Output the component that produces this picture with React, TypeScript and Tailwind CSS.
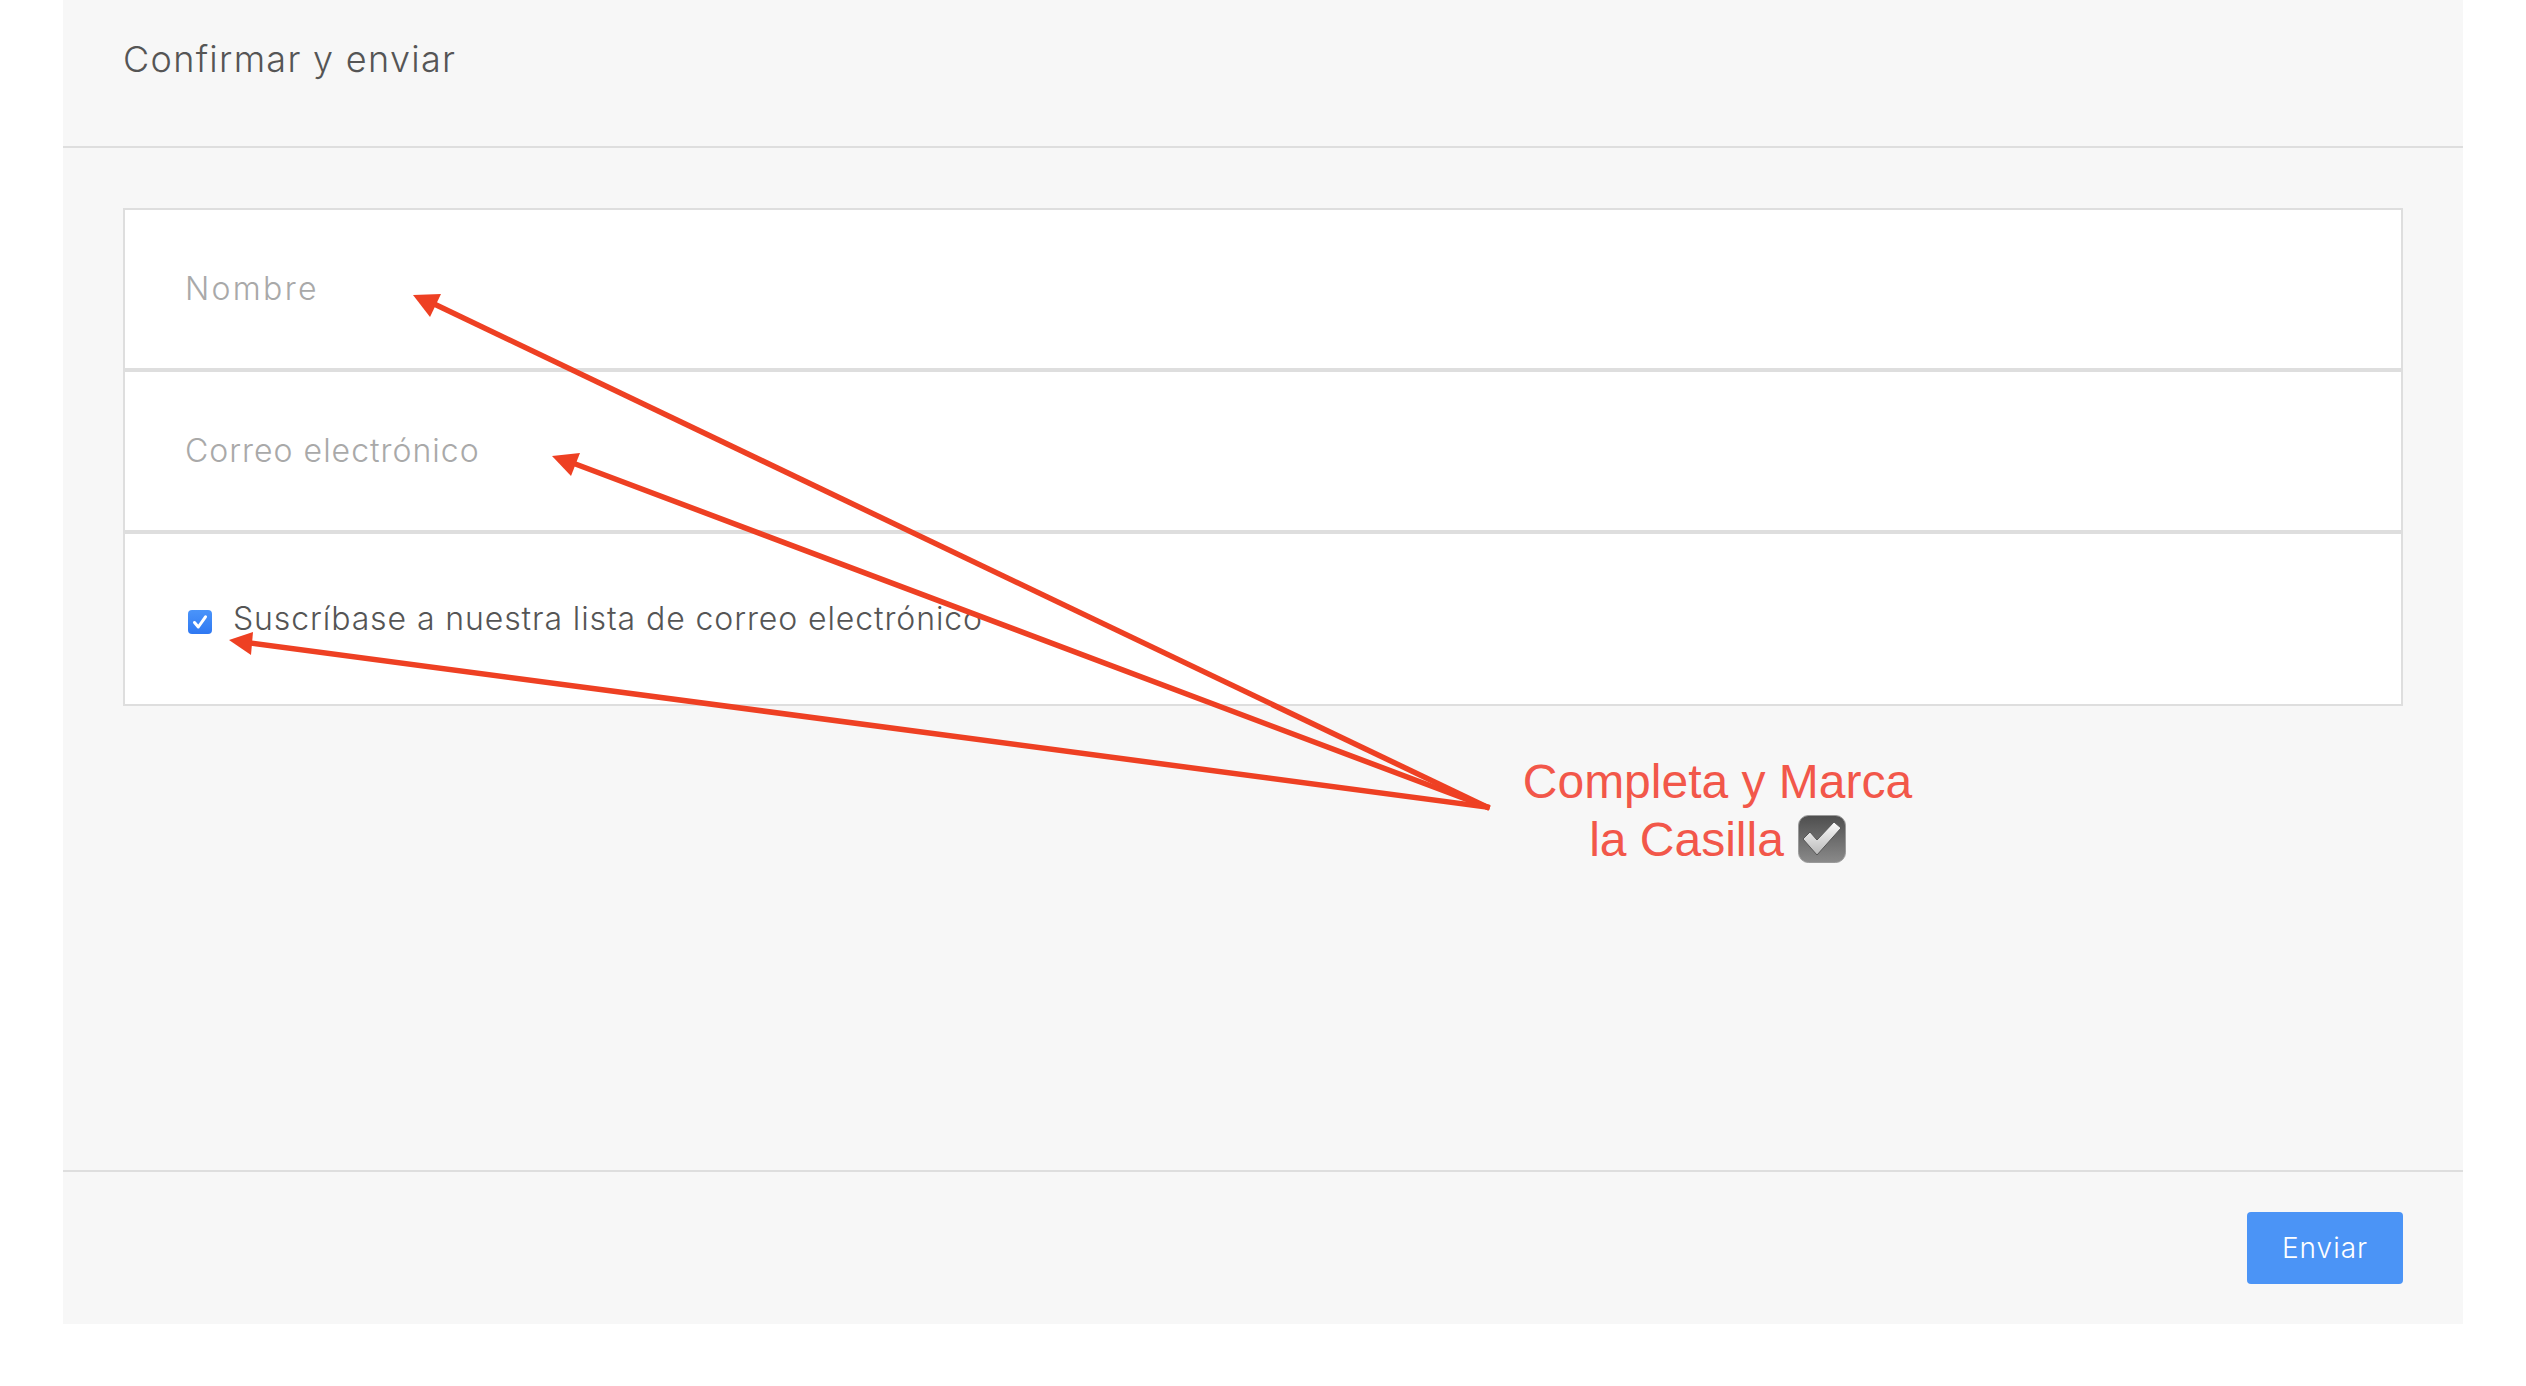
const FONT = "font-['Inter','Noto_Sans',sans-serif]";

function CheckedBox() {
  return (
    <span className="mt-[6px] flex h-6 w-6 shrink-0 items-center justify-center rounded-[4px] bg-gradient-to-b from-[#4a94fa] to-[#2f78f2]">
      <svg width="18" height="18" viewBox="0 0 18 18" fill="none">
        <path d="M3.5 9.5 L7.3 14 L14.5 3.8" stroke="#fff" strokeWidth="3" strokeLinecap="round" strokeLinejoin="round" />
      </svg>
    </span>
  );
}

function Field({ placeholder, tracking }: { placeholder: string; tracking: string }) {
  return (
    <div className="flex h-[162px] items-center border-b-4 border-[#dedede] bg-white pl-[60px]">
      <input
        type="text"
        placeholder={placeholder}
        className={`w-[900px] bg-transparent text-[32px] font-light text-[#555] outline-none placeholder:text-[#a9a9a9] ${tracking}`}
      />
    </div>
  );
}

// red annotation drawn on top of the form
function Arrows() {
  return (
    <svg className="pointer-events-none absolute left-0 top-0" width="2526" height="1386" viewBox="0 0 2526 1386" fill="none">
      <g stroke="#ee4023" strokeWidth="5.5" strokeLinecap="square">
        <line x1="1487" y1="807" x2="432" y2="303" />
        <line x1="1487" y1="807" x2="570" y2="462" />
        <line x1="1487" y1="807" x2="250" y2="643" />
      </g>
      <g fill="#ee4023">
        <polygon points="413,295 441,294 430,317" />
        <polygon points="552,456 580,453 571,476" />
        <polygon points="229,640 253,632 251,655" />
      </g>
    </svg>
  );
}

function Annotation() {
  return (
    <div className="absolute left-[1500px] top-[753px] w-[435px] text-center font-['Liberation_Sans',Arial,sans-serif] text-[48px] leading-[58px] text-[#f2574a]">
      <div>Completa y Marca</div>
      <div className="flex items-center justify-center gap-[14px]">
        <span>la Casilla</span>
        <svg className="-mt-[2px]" width="48" height="48" viewBox="0 0 48 48" fill="none">
          <defs>
            <linearGradient id="box" x1="0" y1="0" x2="0" y2="1">
              <stop offset="0" stopColor="#4e4e4e" />
              <stop offset="1" stopColor="#8a8a8a" />
            </linearGradient>
            <linearGradient id="tick" x1="0" y1="0" x2="0" y2="1">
              <stop offset="0" stopColor="#fbfbfb" />
              <stop offset="1" stopColor="#b9b9b9" />
            </linearGradient>
          </defs>
          <rect x="0.5" y="0.5" width="47" height="47" rx="10" fill="url(#box)" stroke="#9a9a9a" />
          <path d="M5 24 L12 17 L19 25 L36 7 L43 13 L19 40 Z" fill="url(#tick)" stroke="#555" strokeWidth="1" />
        </svg>
      </div>
    </div>
  );
}

export default function App() {
  return (
    <div className={`relative h-[1386px] w-[2526px] overflow-hidden bg-white ${FONT}`}>
      <main className="ml-[63px] flex h-[1324px] w-[2400px] flex-col bg-[#f7f7f7]">
        {/* Header */}
        <header className="h-[148px] shrink-0 border-b-2 border-[#dedede] pl-[60px] pt-[38px]">
          <h1 className="text-[36px] font-light leading-[42px] tracking-[1.3px] text-[#555]">Confirmar y enviar</h1>
        </header>

        {/* Form */}
        <div className="flex-1 px-[60px] pt-[60px]">
          <div className="border-2 border-[#dedede]">
            <Field placeholder="Nombre" tracking="tracking-[2.3px]" />
            <Field placeholder="Correo electrónico" tracking="tracking-[1px]" />
            <label className="flex h-[170px] items-center gap-[21px] bg-white pl-[63px]">
              <CheckedBox />
              <span className="text-[32px] font-light leading-[40px] tracking-[0.9px] text-[#555]">
                Suscríbase a nuestra lista de correo electrónico
              </span>
            </label>
          </div>
        </div>

        {/* Footer */}
        <footer className="flex h-[154px] shrink-0 items-start justify-end border-t-2 border-[#dedede] pr-[60px] pt-[40px]">
          <button className="h-[72px] w-[156px] rounded-[4px] bg-[#4b94f6] text-[28px] font-light tracking-[1px] text-white">
            Enviar
          </button>
        </footer>
      </main>

      <Arrows />
      <Annotation />
    </div>
  );
}
